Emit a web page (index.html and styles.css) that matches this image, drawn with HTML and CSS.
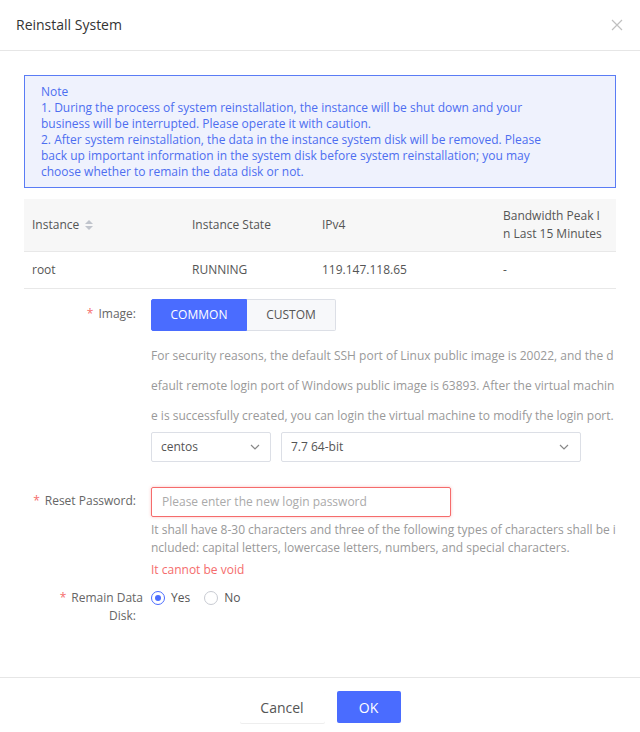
FILE: index.html
```html
<!DOCTYPE html>
<html>
<head>
<meta charset="utf-8">
<link rel="stylesheet" href="styles.css">
</head>
<body>
<div class="dialog">
  <div class="dlg-header">
    <span class="dlg-title">Reinstall System</span>
    <svg class="close" width="12" height="12" viewBox="0 0 12 12"><path d="M1 1L11 11M11 1L1 11" stroke="#c0c0c0" stroke-width="1.2" fill="none"/></svg>
  </div>
  <div class="dlg-body">
    <div class="note">
      <div>Note</div>
      <div>1. During the process of system reinstallation, the instance will be shut down and your business will be interrupted. Please operate it with caution.</div>
      <div>2. After system reinstallation, the data in the instance system disk will be removed. Please back up important information in the system disk before system reinstallation; you may choose whether to remain the data disk or not.</div>
    </div>
    <table class="tbl">
      <colgroup><col class="c1"><col class="c2"><col class="c3"><col class="c4"></colgroup>
      <thead>
        <tr>
          <th><span class="th-sort">Instance <svg width="8" height="10" viewBox="0 0 8 10"><path d="M4 0L8 4H0Z M4 10L0 6H8Z" fill="#c0c4cc"/></svg></span></th>
          <th>Instance State</th>
          <th>IPv4</th>
          <th class="wrap">Bandwidth Peak In Last 15 Minutes</th>
        </tr>
      </thead>
      <tbody>
        <tr><td>root</td><td>RUNNING</td><td>119.147.118.65</td><td>-</td></tr>
      </tbody>
    </table>

    <div class="form-item item-image">
      <div class="label"><span class="req">*</span>Image:</div>
      <div class="content">
        <div class="seg">
          <button class="seg-btn active">COMMON</button>
          <button class="seg-btn">CUSTOM</button>
        </div>
        <p class="hint-lg">For security reasons, the default SSH port of Linux public image is 20022, and the default remote login port of Windows public image is 63893. After the virtual machine is successfully created, you can login the virtual machine to modify the login port.</p>
        <div class="selects">
          <div class="select s1"><span>centos</span><svg width="10" height="6" viewBox="0 0 10 6"><path d="M1 1L5 5L9 1" stroke="#888" stroke-width="1.2" fill="none"/></svg></div>
          <div class="select s2"><span>7.7 64-bit</span><svg width="10" height="6" viewBox="0 0 10 6"><path d="M1 1L5 5L9 1" stroke="#888" stroke-width="1.2" fill="none"/></svg></div>
        </div>
      </div>
    </div>

    <div class="form-item item-pwd">
      <div class="label"><span class="req">*</span>Reset Password:</div>
      <div class="content">
        <div class="input error">Please enter the new login password</div>
        <p class="hint-sm">It shall have 8-30 characters and three of the following types of characters shall be included: capital letters, lowercase letters, numbers, and special characters.</p>
        <div class="err">It cannot be void</div>
      </div>
    </div>

    <div class="form-item item-disk">
      <div class="label"><span class="req">*</span><span class="overhang">Remain Data</span><br>Disk:</div>
      <div class="content radios">
        <label class="radio"><span class="dot checked"></span>Yes</label>
        <label class="radio"><span class="dot"></span>No</label>
      </div>
    </div>
  </div>
  <div class="dlg-footer">
    <button class="btn cancel">Cancel</button>
    <button class="btn ok">OK</button>
  </div>
</div>
</body>
</html>
```

FILE: styles.css
```css
* { box-sizing: border-box; }
html, body { margin: 0; padding: 0; background: #fff; }
body { font-family: "Open Sans", "Liberation Sans", sans-serif; font-size: 12px; color: #555; }
.dialog { width: 640px; height: 732px; background: #fff; display: flex; flex-direction: column; }
.dlg-header { height: 51px; border-bottom: 1px solid #e6e6e6; display: flex; align-items: center; justify-content: space-between; padding: 0 17px 2px 16px; }
.dlg-title { font-size: 14px; color: #333; }
.close { display: block; margin-top: 2px; }
.dlg-body { padding: 24px 24px 0 24px; flex: 1; }
.note { border: 1px solid #5a7cf5; background: #eff2fd; color: #4d6ef0; padding: 8px 60px 7px 16px; line-height: 16px; height: 113px; }
.tbl { width: 592px; border-collapse: collapse; margin-top: 11px; table-layout: fixed; }
.c1 { width: 160px; } .c2 { width: 130px; } .c3 { width: 181px; } .c4 { width: 121px; }
.tbl th { background: #f7f7f7; font-weight: normal; text-align: left; height: 52px; padding: 0 8px; color: #555; line-height: 18px; border-bottom: 1px solid #e8e8e8; }
.tbl th.wrap { word-break: break-all; padding-right: 14px; }
.tbl td { height: 37px; padding: 0 8px; border-bottom: 1px solid #e8e8e8; color: #555; }
.th-sort { display: inline-flex; align-items: center; gap: 4px; }
.th-sort svg { margin-left: 2px; }
.form-item { display: flex; }
.label { width: 127px; text-align: right; color: #666; line-height: 18px; padding-right: 15px; flex-shrink: 0; }
.req { color: #f56c6c; margin-right: 5px; }
.overhang { margin-right: -7px; }
.content { flex: 1; }
.item-image { margin-top: 10px; }
.item-image .label { padding-top: 6px; }
.seg { display: flex; }
.seg-btn { font-family: inherit; font-size: 12px; height: 32px; border: 1px solid #dcdfe6; background: #f7f8fa; color: #555; padding: 0; border-radius: 0; }
.seg-btn.active { background: #4a6cff; border-color: #4a6cff; color: #fff; width: 96px; border-radius: 2px 0 0 2px; }
.seg-btn:not(.active) { width: 89px; border-left: none; border-radius: 0 2px 2px 0; }
.hint-lg { margin: 10px 0 0 0; color: #999; line-height: 30px; word-break: break-all; width: 465px; }
.selects { display: flex; gap: 10px; margin-top: 1px; }
.select { height: 30px; border: 1px solid #dcdfe6; border-radius: 2px; display: flex; align-items: center; justify-content: space-between; padding: 0 10px 0 9px; color: #555; }
.s1 { width: 120px; } .s2 { width: 300px; padding-right: 11px; }
.item-pwd { margin-top: 25px; }
.item-pwd .label { padding-top: 5px; }
.input { width: 300px; height: 30px; border: 1px solid #f56c6c; border-radius: 2px; box-shadow: 0 0 3px rgba(245,108,108,0.45); color: #aaa; display: flex; align-items: center; padding-left: 10px; }
.hint-sm { margin: 4px 0 0 0; color: #999; line-height: 18px; word-break: break-all; width: 465px; }
.err { color: #f56c6c; line-height: 18px; margin-top: 4px; }
.item-disk { margin-top: 10px; }
.radios { display: flex; gap: 14px; align-items: flex-start; height: 18px; }
.radio { display: flex; align-items: center; gap: 6px; color: #555; line-height: 18px; }
.dot { width: 14px; height: 14px; border: 1px solid #c8cbd2; border-radius: 50%; display: inline-block; position: relative; }
.dot.checked { border-color: #4a6cff; }
.dot.checked::after { content: ""; position: absolute; left: 3px; top: 3px; width: 6px; height: 6px; border-radius: 50%; background: #4a6cff; }
.dlg-footer { border-top: 1px solid #e6e6e6; height: 55px; display: flex; justify-content: center; align-items: flex-start; gap: 12px; padding-top: 13px; margin-bottom: 0; }
.btn { font-family: inherit; font-size: 14px; height: 32px; border: none; border-radius: 2px; padding: 0; }
.cancel { background: #fff; color: #555; width: 85px; box-shadow: 0 1px 0 #eee; }
.ok { background: #4a6cff; color: #fff; width: 64px; }
```
